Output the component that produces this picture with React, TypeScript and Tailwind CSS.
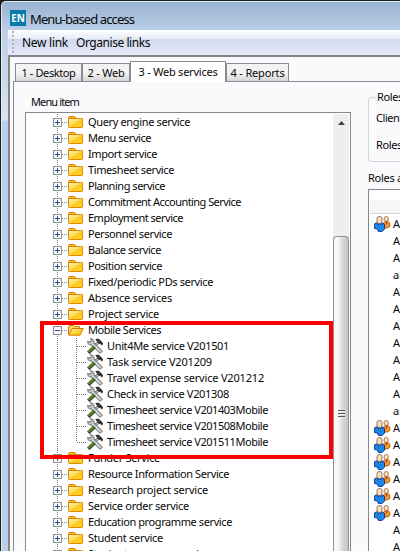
import React, { useLayoutEffect, useRef } from "react";

function Label({ text, width, className = "" }: { text: string; width: number; className?: string }) {
  const ref = useRef<HTMLSpanElement>(null);
  useLayoutEffect(() => {
    const el = ref.current;
    if (!el) return;
    el.style.letterSpacing = "0px";
    const natural = el.getBoundingClientRect().width;
    el.style.letterSpacing = `${(width - natural) / text.length}px`;
  }, [text, width]);
  return (
    <span ref={ref} className={`inline-block shrink-0 whitespace-nowrap ${className}`}>
      {text}
    </span>
  );
}

const before: [string, number][] = [
  ["Query engine service", 102],
  ["Menu service", 63],
  ["Import service", 69],
  ["Timesheet service", 86],
  ["Planning service", 77],
  ["Commitment Accounting Service", 153],
  ["Employment service", 95],
  ["Personnel service", 84],
  ["Balance service", 73],
  ["Position service", 74],
  ["Fixed/periodic PDs service", 125],
  ["Absence services", 84],
  ["Project service", 71],
];
const mobile: [string, number][] = [
  ["Unit4Me service V201501", 122],
  ["Task service V201209", 105],
  ["Travel expense service V201212", 157],
  ["Check in service V201308", 122],
  ["Timesheet service V201403Mobile", 161],
  ["Timesheet service V201508Mobile", 161],
  ["Timesheet service V201511Mobile", 161],
];
const after: [string, number][] = [
  ["Funder Service", 72],
  ["Resource Information Service", 141],
  ["Research project service", 120],
  ["Service order service", 101],
  ["Education programme service", 144],
  ["Student service", 75],
  ["Student expense service", 122],
];
const roles: [string, boolean][] = [
  ["Ac", true],
  ["Ac", false],
  ["Ac", false],
  ["ab", false],
  ["Ab", false],
  ["Ab", false],
  ["Ab", false],
  ["Ar", false],
  ["Ar", false],
  ["Ac", false],
  ["Ab", false],
  ["ar", false],
  ["As", true],
  ["As", true],
  ["As", true],
  ["As", true],
  ["As", true],
  ["Ab", true],
  ["Ar", false],
  ["Ar", false],
];

function Folder({ open }: { open?: boolean }) {
  return (
    <svg width="16" height="16" viewBox="0 0 16 16" className="shrink-0">
      <defs>
        <linearGradient id="folderFill" x1="0" y1="0" x2="1" y2="1">
          <stop offset="0" stopColor="#fff0a0" />
          <stop offset=".5" stopColor="#ffd957" />
          <stop offset=".52" stopColor="#ffc91f" />
          <stop offset="1" stopColor="#ffd51c" />
        </linearGradient>
      </defs>
      {open ? (
        <>
          <path d="M.5 12.5V4.5L2 3.5H5.5L6.5 4.5H11.5V7" fill="#ffdc69" stroke="#d57b00" />
          <path d="M.8 13.2L4 6.5H15.3L12 13.2Z" fill="url(#folderFill)" stroke="#d57b00" />
        </>
      ) : (
        <>
          <path d="M.5 5V3.5L1.5 2.5H6.5L7.5 3.5V5" fill="#ffb43a" stroke="#d57b00" />
          <rect x=".5" y="4.5" width="14" height="9" rx=".7" fill="url(#folderFill)" stroke="#e08600" />
        </>
      )}
    </svg>
  );
}

function Tools() {
  return (
    <svg width="17" height="16" viewBox="0 0 17 16" className="shrink-0">
      <path d="M11 4.5L6 9.5" stroke="#5d6365" strokeWidth="2.6" />
      <path d="M11 4.5L6 9.5" stroke="#c9cecf" strokeWidth="1.1" />
      <path d="M3.2 .8L4.4 2.2L3.6 3.8L1.8 3.9L.8 3L.9 5.3L2.6 7L5 7L11.8 14.3L13.6 15.1L15.2 13.4L14.2 11.7L7 5L6.8 2.5L5.4 1Z" fill="#bcc2c3" stroke="#5f6566" strokeWidth=".9" />
      <path d="M5 5.6L12.6 13.2" stroke="#eef0f0" strokeWidth="1" />
      <path d="M1.3 14.8L7.4 8.7" stroke="#2f4d19" strokeWidth="3.6" />
      <path d="M1.7 13.7L7 8.4" stroke="#639a3b" strokeWidth="1.5" />
      <path d="M8.3 1.2L11 .5L13.2 2L16 5.2L15.4 7.6L14 6.8L13.6 5.6L12 6L10 3.4Z" fill="#25292b" />
      <path d="M10.8 2.2L12.6 4" stroke="#7c8284" strokeWidth=".8" />
    </svg>
  );
}

function People() {
  return (
    <svg width="17" height="16" viewBox="0 0 17 16" className="shrink-0">
      <path d="M9.5 7L11.5 5.5H14L15.9 7.3V10.2L13.8 12H9.5Z" fill="#f59a20" stroke="#b04a12" strokeWidth=".8" />
      <path d="M11.4 6L12.4 9L13.6 6Z" fill="#c8321c" />
      <ellipse cx="12.2" cy="3" rx="2.2" ry="2.6" fill="#ffe1aa" stroke="#96604a" strokeWidth=".8" />
      <path d="M.6 7.8L2.5 6.8H8L10.5 8.3V13L8.2 15.4H4.4L3.4 13L.6 12.6Z" fill="#168be9" stroke="#143796" strokeWidth="1" />
      <path d="M3 7.2L5.5 11.4L8 7.2Z" fill="#143c9d" />
      <path d="M5.5 8L5.1 10L5.8 10.6L6.4 10Z" fill="#9fd2ff" />
      <rect x="3" y=".6" width="5" height="7" rx="2" fill="#f8dcae" stroke="#8b6a68" strokeWidth=".9" />
    </svg>
  );
}

function Expander({ open }: { open?: boolean }) {
  return (
    <svg width="15" height="16" viewBox="0 0 15 16" className="shrink-0" shapeRendering="crispEdges">
      <path d="M4.5 0V16" stroke="#777" strokeDasharray="1 1" />
      <rect x=".5" y="4.5" width="8" height="8" fill="#f7f7f7" stroke="#919191" />
      <path d="M2 8.5H7" stroke="#294fa5" />
      {!open && <path d="M4.5 6V11" stroke="#294fa5" />}
      <path d="M9 8.5H15" stroke="#888" strokeDasharray="1 1" />
    </svg>
  );
}

function TreeRow({ text, width, open }: { text: string; width: number; open?: boolean }) {
  return (
    <div className="flex h-4 shrink-0 items-center">
      <Expander open={open} />
      <Folder open={open} />
      <Label text={text} width={width} className="ml-1 leading-4" />
    </div>
  );
}

function LeafRow({ text, width, last }: { text: string; width: number; last: boolean }) {
  return (
    <div className="flex h-4 shrink-0 items-center">
      <svg width="34" height="16" className="shrink-0" shapeRendering="crispEdges">
        <path d="M4.5 0V16" stroke="#777" strokeDasharray="1 1" />
        <path d={last ? "M23.5 0V8" : "M23.5 0V16"} stroke="#777" strokeDasharray="1 1" />
        <path d="M24 8.5H34" stroke="#777" strokeDasharray="1 1" />
      </svg>
      <Tools />
      <Label text={text} width={width} className="ml-[3px] leading-4" />
    </div>
  );
}

export default function App() {
  return (
    <div className="relative flex h-[551px] w-[400px] overflow-hidden bg-[#1c1c1c] font-['Noto_Sans',sans-serif] text-[11px] text-[#080808]">
      <div className="ml-px mt-px flex min-w-0 flex-1 flex-col rounded-tl-[5px] border-l border-t border-[#e4edf5] bg-[linear-gradient(#98b2d0,#bdd1e8_30px,#c8daec_80px,#d8e5f2_118px,#b8cfea_119px)]">
        <header className="flex h-7 shrink-0 items-center pl-2 pt-1 text-[13px]">
          <span className="flex h-4 w-4 items-center justify-center bg-[#087aa9] font-['Open_Sans',sans-serif] text-[10px] font-bold text-white">EN</span>
          <Label text="Menu-based access" width={104} className="ml-1 pt-px leading-5" />
        </header>
        <div className="ml-[6px] flex h-[25px] shrink-0 items-center bg-[linear-gradient(#fff,#e5edf7_9px,#d2d9ed_9px,#e3e9f8)] text-[12px]">
          <div className="ml-1 h-6 w-[2px] bg-[repeating-linear-gradient(#aeb4bf_0_2px,transparent_2px_4px)]" />
          <Label text="New link" width={46} className="ml-[8px]" />
          <Label text="Organise links" width={74} className="ml-2" />
        </div>
        <main className="ml-[6px] flex min-h-0 flex-1 border-l-2 border-t-2 border-[#858585] bg-[#fafafd] pl-[3px]">
          <div className="flex min-w-0 flex-1 flex-col">
            <nav className="flex h-6 shrink-0 items-end pl-[2px]">
              <div className="flex h-[18px] w-[67px] items-center justify-center border border-b-0 border-[#898c95] bg-[linear-gradient(#f3f3f3_9px,#d7d7d7)] pt-px"><Label text="1 - Desktop" width={54} /></div>
              <div className="flex h-[18px] w-[48px] items-center justify-center border border-b-0 border-[#898c95] bg-[linear-gradient(#f3f3f3_9px,#d7d7d7)] pt-px"><Label text="2 - Web" width={37} /></div>
              <div className="z-10 -mb-px flex h-[21px] w-[96px] items-center justify-center border border-b-0 border-[#898c95] bg-white"><Label text="3 - Web services" width={79} /></div>
              <div className="flex h-[18px] w-[63px] items-center justify-center border border-b-0 border-[#898c95] bg-[linear-gradient(#f3f3f3_9px,#d7d7d7)] pt-px"><Label text="4 - Reports" width={54} /></div>
            </nav>
            <div className="flex min-h-0 flex-1 border-l border-t border-[#898c95] pl-[11px]">
              <section className="flex w-[326px] shrink-0 flex-col">
                <div className="flex h-[30px] shrink-0 items-center pl-[6px] pt-[11px]"><Label text="Menu item" width={48} /></div>
                <div className="flex min-h-0 flex-1 border border-b-0 border-[#828790] bg-white">
                  <div className="flex min-w-0 flex-1 flex-col overflow-hidden pl-[27px] pt-px">
                    {before.map(([text, width]) => <TreeRow key={text} text={text} width={width} />)}
                    <TreeRow text="Mobile Services" width={73} open />
                    {mobile.map(([text, width], i) => <LeafRow key={text} text={text} width={width} last={i === 6} />)}
                    {after.map(([text, width]) => <TreeRow key={text} text={text} width={width} />)}
                  </div>
                  <div className="mr-px mt-px flex w-4 shrink-0 flex-col bg-[#eee]">
                    <div className="flex h-[122px] justify-center pt-[7px]"><svg width="7" height="4"><path d="M0 4L3.5 0L7 4Z" fill="#414141" /></svg></div>
                    <div className="flex flex-1 items-start justify-center rounded-t-sm border border-b-0 border-[#929292] bg-[linear-gradient(90deg,#f7f7f7_30%,#d8d9dc_60%,#c4c4c6)] pt-[173px]"><div className="h-[8px] w-[7px] bg-[repeating-linear-gradient(#555_0_1px,#eee_1px_2px,transparent_2px_3px)]" /></div>
                  </div>
                </div>
              </section>
              <section className="ml-[17px] flex min-w-0 flex-1 flex-col overflow-hidden">
                <fieldset className="mt-[9px] h-[71px] shrink-0 rounded-l border border-r-0 border-[#cbd8e0] pl-[7px]">
                  <legend className="h-3 pl-px pr-1 leading-3"><Label text="Roles" width={26} /></legend>
                  <div className="mt-[7px] h-4 leading-4"><Label text="Client" width={27} /></div>
                  <div className="mt-[11px] h-4 leading-4"><Label text="Roles" width={26} /></div>
                </fieldset>
                <div className="flex h-[27px] shrink-0 items-center pt-[5px]"><Label text="Roles a" width={35} /></div>
                <div className="flex min-h-0 flex-1 flex-col border border-r-0 border-b-0 border-[#828790] bg-white pl-px">
                  <div className="mb-[2px] mt-[10px] h-[14px] shrink-0 border-b border-[#d5d5d5] bg-[#f5f6f8]" />
                  {roles.map(([text, icon], i) => (
                    <div key={i} className="flex h-[17px] shrink-0 items-center pl-[4px]">
                      <div className="-mt-px w-[19px] shrink-0">{icon && <People />}</div>
                      <span className="whitespace-nowrap">{text}</span>
                    </div>
                  ))}
                </div>
              </section>
            </div>
          </div>
        </main>
      </div>
      <div className="absolute left-[40px] top-[321px] h-[138px] w-[293px] border-4 border-[#fc0000]" />
    </div>
  );
}
